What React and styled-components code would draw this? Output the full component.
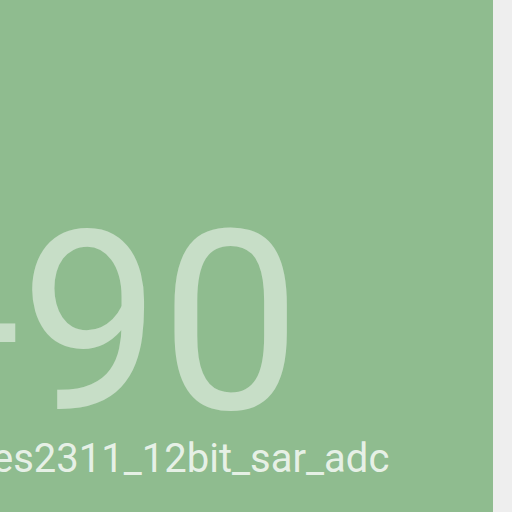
import React from 'react';
import styled, { createGlobalStyle } from 'styled-components';

const GlobalStyle = createGlobalStyle`
  html, body {
    margin: 0;
    padding: 0;
    background: #eeeeee;
    font-family: Roboto, "Liberation Sans", sans-serif;
  }
`;

const Page = styled.div`
  display: flex;
  width: 512px;
  height: 512px;
  overflow: hidden;
`;

const Tile = styled.div`
  width: 493px;
  height: 512px;
  background: #8fbc8f;
  overflow: hidden;
  display: flex;
  flex-direction: column;
  justify-content: flex-end;
  padding-bottom: 33px;
  box-sizing: border-box;
`;

const Value = styled.div`
  font-size: 250px;
  line-height: 1;
  color: rgba(255, 255, 255, 0.5);
  white-space: nowrap;
  margin-left: ${(p) => p.$offset}px;
  margin-bottom: -10px;
`;

const Label = styled.div`
  font-size: 40px;
  line-height: 1;
  color: rgba(255, 255, 255, 0.8);
  white-space: nowrap;
  margin-left: ${(p) => p.$offset}px;
`;

export default function App() {
  return (
    <>
      <GlobalStyle />
      <Page>
        <Tile>
          <Value $offset={-49}>-90</Value>
          <Label $offset={-8}>es2311_12bit_sar_adc</Label>
        </Tile>
      </Page>
    </>
  );
}
